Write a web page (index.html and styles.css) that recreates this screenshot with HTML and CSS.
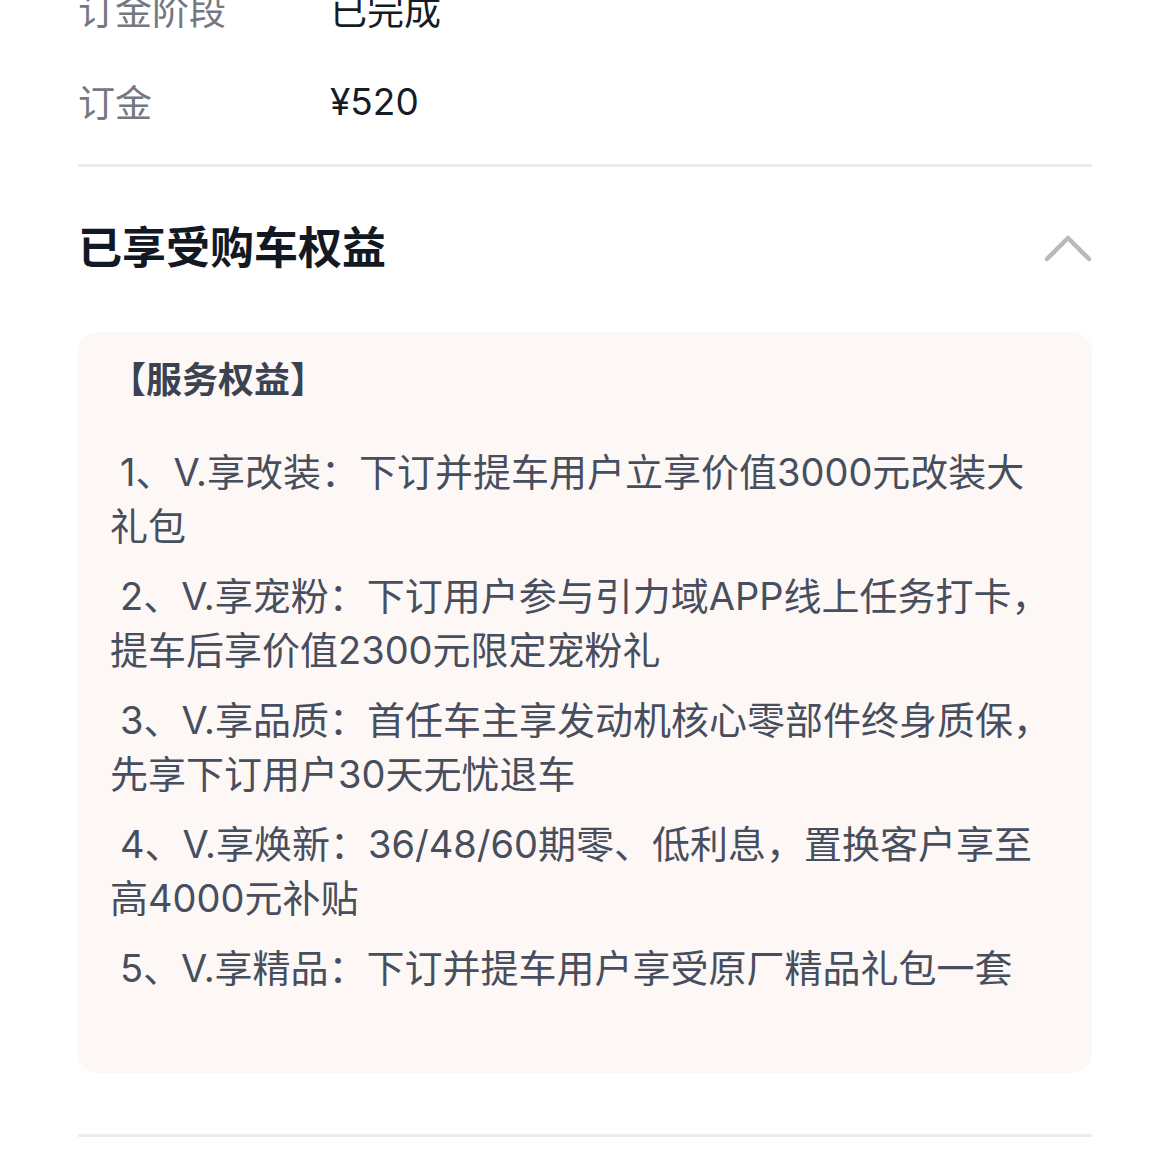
FILE: index.html
```html
<!DOCTYPE html>
<html lang="zh-CN">
<head>
<meta charset="utf-8">
<title>订单详情</title>
<link rel="stylesheet" href="styles.css">
</head>
<body>
<div class="page">
  <div class="info">
    <div class="row"><span class="label">订金阶段</span><span class="value">已完成</span></div>
    <div class="row"><span class="label">订金</span><span class="value">¥520</span></div>
  </div>
  <div class="divider"></div>
  <div class="section-head">
    <h2 class="section-title">已享受购车权益</h2>
    <svg class="chevron" width="48" height="30" viewBox="0 0 48 30" aria-hidden="true">
      <polyline points="3,26 24,5 45,26" fill="none" stroke="#b9b9b9" stroke-width="4.5" stroke-linecap="round" stroke-linejoin="round"/>
    </svg>
  </div>
  <div class="card">
    <div class="card-title">【服务权益】</div>
    <ul class="benefits">
      <li>1、V.享改装：下订并提车用户立享价值3000元改装大礼包</li>
      <li>2、V.享宠粉：下订用户参与引力域APP线上任务打卡，提车后享价值2300元限定宠粉礼</li>
      <li>3、V.享品质：首任车主享发动机核心零部件终身质保，先享下订用户30天无忧退车</li>
      <li>4、V.享焕新：36/48/60期零、低利息，置换客户享至高4000元补贴</li>
      <li>5、V.享精品：下订并提车用户享受原厂精品礼包一套</li>
    </ul>
  </div>
  <div class="divider divider-bottom"></div>
</div>
</body>
</html>
```

FILE: styles.css
```css
html, body {
  margin: 0;
  padding: 0;
  background: #ffffff;
}

body {
  font-family: "Inter", "Noto Sans CJK SC", sans-serif;
  overflow: hidden;
}

.page {
  padding: 0 78px;
  margin-top: -37px;
}

.info {
  display: flex;
  flex-direction: column;
}

.row {
  display: flex;
  align-items: center;
  height: 92px;
  font-size: 37px;
}

.label {
  width: 252px;
  color: #74787f;
}

.value {
  color: #161c26;
}

.divider {
  height: 3px;
  background: #ececec;
  margin-top: 17px;
}

.section-head {
  display: flex;
  align-items: center;
  justify-content: space-between;
  padding: 51px 0 54px;
}

.section-title {
  margin: 0;
  font-size: 44px;
  line-height: 60px;
  font-weight: 700;
  color: #131922;
}

.card {
  background: #fdf8f5;
  border-radius: 20px;
  padding: 24px 35px 78px 32px;
}

.card-title {
  font-size: 36px;
  line-height: 48px;
  font-weight: 700;
  color: #3b4252;
}

.benefits {
  list-style: none;
  margin: 41px 0 0;
  padding: 0;
  display: flex;
  flex-direction: column;
  gap: 16px;
}

.benefits li {
  font-size: 38px;
  line-height: 54px;
  color: #474e5e;
  text-indent: 10px;
}

.divider-bottom {
  margin-top: 61px;
}
```
